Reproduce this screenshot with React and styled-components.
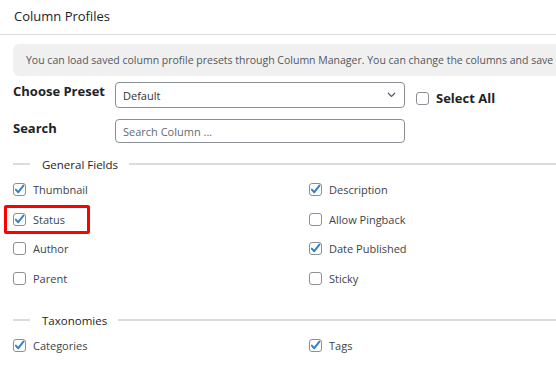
import React from "react";
import styled, { createGlobalStyle } from "styled-components";

const GlobalStyle = createGlobalStyle`
  html, body {
    margin: 0;
    padding: 0;
    background: #fff;
    overflow: hidden;
  }
  body {
    font-family: "Open Sans", "Noto Sans", sans-serif;
    color: #1d2327;
  }
`;

const leftFields = [
  { label: "Thumbnail", checked: true },
  { label: "Status", checked: true, highlight: true },
  { label: "Author", checked: false },
  { label: "Parent", checked: false },
];

const rightFields = [
  { label: "Description", checked: true },
  { label: "Allow Pingback", checked: false },
  { label: "Date Published", checked: true },
  { label: "Sticky", checked: false },
];

function Check({ checked }) {
  return (
    <Box>
      {checked && (
        <svg width="11" height="11" viewBox="0 0 11 11">
          <path
            d="M1.8 5.6 L4.3 8.2 L9.4 1.6"
            fill="none"
            stroke="#3582c4"
            strokeWidth="2"
            strokeLinecap="round"
            strokeLinejoin="round"
          />
        </svg>
      )}
    </Box>
  );
}

function Field({ label, checked, highlight }) {
  return (
    <FieldRow $highlight={highlight}>
      <Check checked={checked} />
      <FieldLabel>{label}</FieldLabel>
    </FieldRow>
  );
}

export default function App() {
  return (
    <Panel>
      <GlobalStyle />
      <Header>
        <Title>Column Profiles</Title>
      </Header>
      <Content>
        <Notice>
          You can load saved column profile presets through Column Manager. You can change the columns and save
        </Notice>

        <FormRow>
          <Label>Choose Preset</Label>
          <SelectBox>
            <span>Default</span>
            <svg width="9" height="6" viewBox="0 0 9 6">
              <path d="M1 1 L4.5 4.5 L8 1" fill="none" stroke="#50575e" strokeWidth="1.2" />
            </svg>
          </SelectBox>
          <SelectAll>
            <Check checked={false} />
            <SelectAllText>Select All</SelectAllText>
          </SelectAll>
        </FormRow>

        <FormRow $gap={11}>
          <Label>Search</Label>
          <SearchInput placeholder="Search Column ..." />
        </FormRow>

        <Legend $top={12}>
          <LegendText>General Fields</LegendText>
        </Legend>
        <FieldGrid $top={2}>
          <Column>
            {leftFields.map((f) => (
              <Field key={f.label} {...f} />
            ))}
          </Column>
          <Column>
            {rightFields.map((f) => (
              <Field key={f.label} {...f} />
            ))}
          </Column>
        </FieldGrid>

        <Legend $top={18}>
          <LegendText>Taxonomies</LegendText>
        </Legend>
        <FieldGrid $top={2}>
          <Column>
            <Field label="Categories" checked />
          </Column>
          <Column>
            <Field label="Tags" checked />
          </Column>
        </FieldGrid>
      </Content>
    </Panel>
  );
}

const Panel = styled.div`
  width: 556px;
  height: 381px;
  overflow: hidden;
  background: #fff;
`;

const Header = styled.div`
  height: 35px;
  display: flex;
  align-items: center;
  padding: 0 14px;
  border-bottom: 1px solid #dcdcde;
  box-sizing: border-box;
`;

const Title = styled.h2`
  margin: 0;
  font-size: 13px;
  font-weight: 400;
  color: #1d2327;
  margin-top: -3px;
`;

const Content = styled.div`
  padding: 9px 0 0 13px;
`;

const Notice = styled.div`
  width: 620px;
  height: 32px;
  box-sizing: border-box;
  background: #f0f0f1;
  border-radius: 6px;
  padding-left: 13px;
  display: flex;
  align-items: center;
  white-space: nowrap;
  overflow: hidden;
  font-size: 10.5px;
  color: #50575e;
`;

const FormRow = styled.div`
  display: flex;
  align-items: flex-start;
  margin-top: ${(p) => p.$gap ?? 6}px;
`;

const Label = styled.div`
  width: 102px;
  font-size: 13px;
  font-weight: 700;
  color: #1d2327;
  line-height: 18px;
`;

const SelectBox = styled.div`
  width: 290px;
  height: 26px;
  box-sizing: border-box;
  border: 1px solid #8c8f94;
  border-radius: 4px;
  display: flex;
  align-items: center;
  justify-content: space-between;
  padding: 0 8px 0 7px;
  font-size: 11px;
  color: #2c3338;
`;

const SearchInput = styled.input`
  width: 290px;
  height: 24px;
  box-sizing: border-box;
  border: 1px solid #8c8f94;
  border-radius: 4px;
  padding: 0 7px;
  font-family: inherit;
  font-size: 11px;
  color: #2c3338;
  outline: none;

  &::placeholder {
    color: #646970;
  }
`;

const SelectAll = styled.div`
  display: flex;
  align-items: center;
  gap: 7px;
  margin: 7px 0 0 11px;
`;

const SelectAllText = styled.span`
  font-size: 13px;
  font-weight: 700;
  color: #1d2327;
`;

const Legend = styled.div`
  display: flex;
  align-items: center;
  height: 18px;
  margin-top: ${(p) => p.$top}px;
  width: 620px;

  &::before,
  &::after {
    content: "";
    height: 2px;
    background: #dcdcde;
  }
  &::before {
    width: 17px;
  }
  &::after {
    flex: 1;
  }
`;

const LegendText = styled.span`
  padding: 0 11px 0 12px;
  font-size: 11.5px;
  font-weight: 500;
  color: #1d2327;
`;

const FieldGrid = styled.div`
  display: grid;
  grid-template-columns: 296px 1fr;
  margin-top: ${(p) => p.$top ?? 0}px;
`;

const Column = styled.div`
  display: flex;
  flex-direction: column;
`;

const FieldRow = styled.label`
  position: relative;
  height: 29.5px;
  display: flex;
  align-items: center;
  gap: 7px;

  ${(p) =>
    p.$highlight &&
    `
    &::after {
      content: "";
      position: absolute;
      left: -9px;
      top: 0;
      width: 86px;
      height: 29px;
      box-sizing: border-box;
      border: 3px solid #ff0000;
      border-radius: 2px;
    }
  `}
`;

const Box = styled.span`
  width: 13px;
  height: 13px;
  box-sizing: border-box;
  border: 1px solid #8c8f94;
  border-radius: 3px;
  background: #fff;
  display: inline-flex;
  align-items: center;
  justify-content: center;
  flex-shrink: 0;
`;

const FieldLabel = styled.span`
  font-size: 11px;
  color: #3c434a;
`;
